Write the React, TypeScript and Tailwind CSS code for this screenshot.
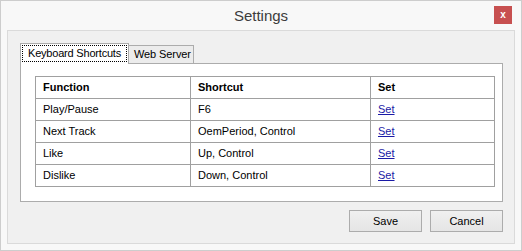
import React from 'react';

const rows = [
  { fn: 'Play/Pause', shortcut: 'F6' },
  { fn: 'Next Track', shortcut: 'OemPeriod, Control' },
  { fn: 'Like', shortcut: 'Up, Control' },
  { fn: 'Dislike', shortcut: 'Down, Control' },
];

const cell = 'border border-[#a0a0a0] h-[22px] py-0 align-middle';

export default function App() {
  return (
    <div
      className="w-[522px] h-[251px] bg-[#f8f8f8] border border-[#cdcdcd] flex flex-col text-[11px] text-black"
      style={{ fontFamily: '"Liberation Sans", Arial, sans-serif' }}
    >
      {/* title bar */}
      <div className="relative h-[29px] shrink-0 flex items-center justify-center">
        <span className="text-[15px] text-[#3c3c3c] leading-none">Settings</span>
        <div className="absolute right-[9px] top-[5px] w-[18px] h-[18px] bg-[#c75050] flex items-center justify-center">
          <span className="text-white text-[10px] font-bold leading-none -mt-px">x</span>
        </div>
      </div>

      {/* client area */}
      <div className="flex-1 mx-[6px] mb-[6px] bg-[#f0f0f0] border border-[#dadada]">
        <div className="ml-3 mt-3 w-[483px]">
          <div className="flex items-end">
            <div className="relative z-10 h-[21px] -mb-px w-[109px] bg-white border border-b-0 border-[#acacac] px-px pt-px pb-[2px]">
              <div className="h-full border border-dotted border-black flex items-center pl-[5px] tracking-[-0.2px]">
                Keyboard Shortcuts
              </div>
            </div>
            <div className="h-[18px] w-[66px] -ml-px bg-[#ececec] border border-b-0 border-[#acacac] flex items-center pl-[5px] tracking-[-0.1px]">
              Web Server
            </div>
          </div>
          <div className="h-[139px] bg-white border border-[#acacac] pl-[14px] pt-[12px]">
            <table className="w-[459px] border-collapse table-fixed">
              <colgroup>
                <col className="w-[155px]" />
                <col className="w-[180px]" />
                <col className="w-[124px]" />
              </colgroup>
              <thead>
                <tr>
                  <th className={`${cell} text-left font-bold pl-[7px]`}>Function</th>
                  <th className={`${cell} text-left font-bold pl-[7px]`}>Shortcut</th>
                  <th className={`${cell} text-left font-bold pl-[7px]`}>Set</th>
                </tr>
              </thead>
              <tbody>
                {rows.map(r => (
                  <tr key={r.fn}>
                    <td className={`${cell} pl-[7px]`}>{r.fn}</td>
                    <td className={`${cell} pl-[7px]`}>{r.shortcut}</td>
                    <td className={`${cell} pl-[7px]`}>
                      <span className="text-[#1a1aa6] underline">Set</span>
                    </td>
                  </tr>
                ))}
              </tbody>
            </table>
          </div>
          <div className="flex justify-end gap-2 mt-2">
            <button className="w-[73px] h-[22px] border border-[#acacac] bg-gradient-to-b from-[#f0f0f0] to-[#e5e5e5] text-[11px]">
              Save
            </button>
            <button className="w-[73px] h-[22px] border border-[#acacac] bg-gradient-to-b from-[#f0f0f0] to-[#e5e5e5] text-[11px]">
              Cancel
            </button>
          </div>
        </div>
      </div>
    </div>
  );
}
